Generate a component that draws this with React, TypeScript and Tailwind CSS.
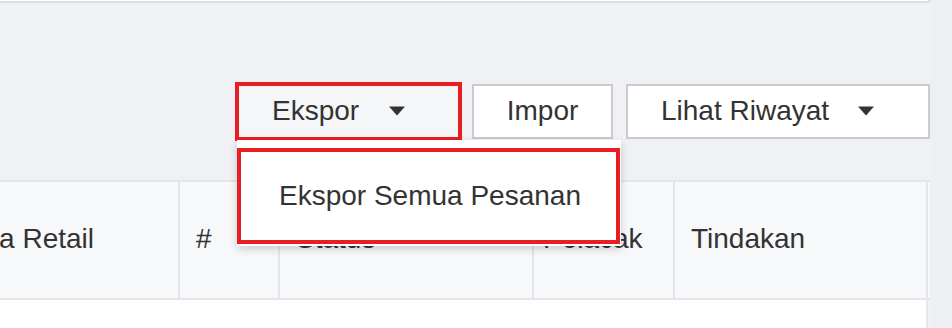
import React from "react";

function Caret() {
  return (
    <svg width="18" height="10" viewBox="0 0 18 10" className="shrink-0">
      <path d="M1 0.5h16L9 9.5z" fill="#333333" />
    </svg>
  );
}

const columns = [
  { label: "Nama Retail", cls: "w-[256px] pl-4" },
  { label: "#", cls: "w-[100px] pl-4" },
  { label: "Status", cls: "w-[254px] pl-4" },
  { label: "Pelacak", cls: "w-[141px] pl-[9px]" },
  { label: "Tindakan", cls: "w-[253px] pl-4" },
];

export default function App() {
  return (
    <div className="flex h-[328px] w-[952px] overflow-hidden bg-[#f0f1f5] font-['Liberation_Sans',Arial,sans-serif] text-[28px] text-[#333333]">
      <div className="flex w-[930px] shrink-0 flex-col">
        {/* top panel edge */}
        <div className="h-[3px] border-b-2 border-r-2 border-[#dcdde1] bg-white" />

        {/* toolbar */}
        <div className="mt-[79px] flex h-[59px] items-center justify-end">
          <div className="relative z-10">
            <div className="flex h-[59px] w-[227px] items-center border-4 border-[#e81e25] bg-[#f5f6f8] pl-[33px]">
              <span>Ekspor</span>
              <span className="ml-[29px]">
                <Caret />
              </span>
            </div>

            <div className="absolute left-[2px] top-[58px] h-[106px] w-[384px] bg-white pt-[8px] shadow-[0_3px_8px_rgba(0,0,0,0.18)]">
              <div className="flex h-[96px] w-[383px] items-center border-4 border-[#e81e25] pl-[38px]">
                Ekspor Semua Pesanan
              </div>
            </div>
          </div>

          <button className="ml-[10px] flex h-[55px] w-[141px] items-center justify-center border-2 border-[#c9cbd0] bg-white">
            Impor
          </button>

          <button className="ml-[13px] flex h-[55px] w-[304px] items-center border-2 border-[#c9cbd0] bg-white pl-[33px]">
            <span>Lihat Riwayat</span>
            <span className="ml-[28px]">
              <Caret />
            </span>
          </button>
        </div>

        {/* table */}
        <div className="mt-[39px] w-[930px] overflow-hidden">
          <div className="ml-[-76px]">
            <div className="flex h-[120px] border-y-2 border-[#e5e6ea] bg-[#f7f8fa]">
              {columns.map((col) => (
                <div
                  key={col.label}
                  className={`${col.cls} flex items-center whitespace-nowrap border-r-2 border-[#e5e6ea] pb-[2px]`}
                >
                  {col.label}
                </div>
              ))}
            </div>
            <div className="h-[40px] w-[1004px] border-r-2 border-[#e5e6ea] bg-white" />
          </div>
        </div>
      </div>

      <div className="flex-1 bg-[#eeeff3]" />
    </div>
  );
}
